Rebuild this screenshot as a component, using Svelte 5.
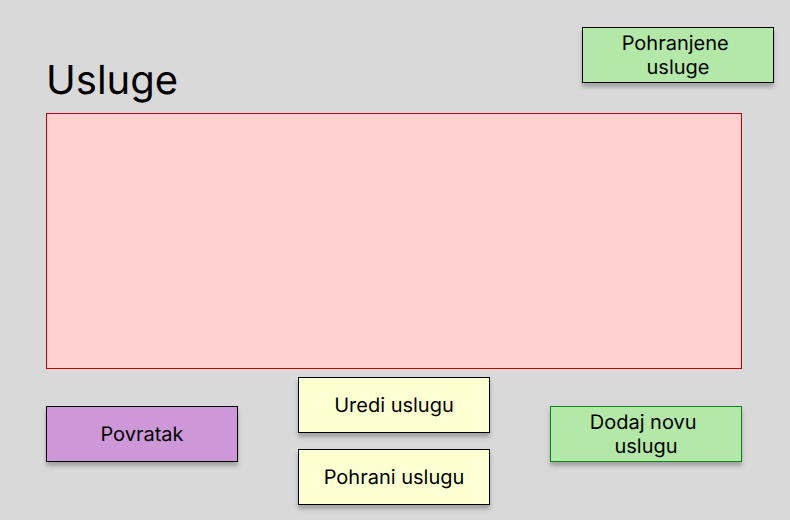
<script>
  const title = 'Usluge';
</script>

<main>
  <header>
    <h1>{title}</h1>
    <button type="button" class="green">Pohranjene usluge</button>
  </header>

  <section class="list" aria-label={title}></section>

  <footer>
    <button type="button" class="purple">Povratak</button>
    <div class="stack">
      <button type="button" class="yellow">Uredi uslugu</button>
      <button type="button" class="yellow">Pohrani uslugu</button>
    </div>
    <button type="button" class="green add">Dodaj novu uslugu</button>
  </footer>
</main>

<style>
  :global(body) {
    margin: 0;
    background: #d9d9d9;
  }

  main {
    box-sizing: border-box;
    min-height: 100vh;
    display: flex;
    flex-direction: column;
    padding: 27px 48px 15px 46px;
    font-family: Inter, sans-serif;
    color: #000;
  }

  header {
    display: flex;
    justify-content: space-between;
    align-items: flex-start;
    margin-right: -32px;
  }

  h1 {
    margin: 29px 0 9px;
    font-size: 40px;
    line-height: 48px;
    font-weight: 400;
    text-rendering: geometricPrecision;
  }

  .list {
    flex: 1;
    min-height: 160px;
    border: 1px solid #c40000;
    background: #ffd0d0;
  }

  footer {
    display: flex;
    justify-content: space-between;
    align-items: flex-start;
    margin-top: 8px;
  }

  footer > button {
    margin-top: 29px;
  }

  .stack {
    display: flex;
    flex-direction: column;
    gap: 16px;
  }

  button {
    box-sizing: border-box;
    width: 192px;
    height: 56px;
    padding: 0 16px;
    border: 1px solid #000;
    box-shadow: 0 4px 4px rgba(0, 0, 0, 0.25);
    font: 400 20px/24px Inter, sans-serif;
    text-rendering: geometricPrecision;
    white-space: break-spaces;
    color: #000;
    cursor: pointer;
  }

  .green {
    background: #b3e8a8;
  }

  .add {
    border-color: #008717;
  }

  .purple {
    background: #ce97d8;
  }

  .yellow {
    background: #fbffd1;
  }
</style>
